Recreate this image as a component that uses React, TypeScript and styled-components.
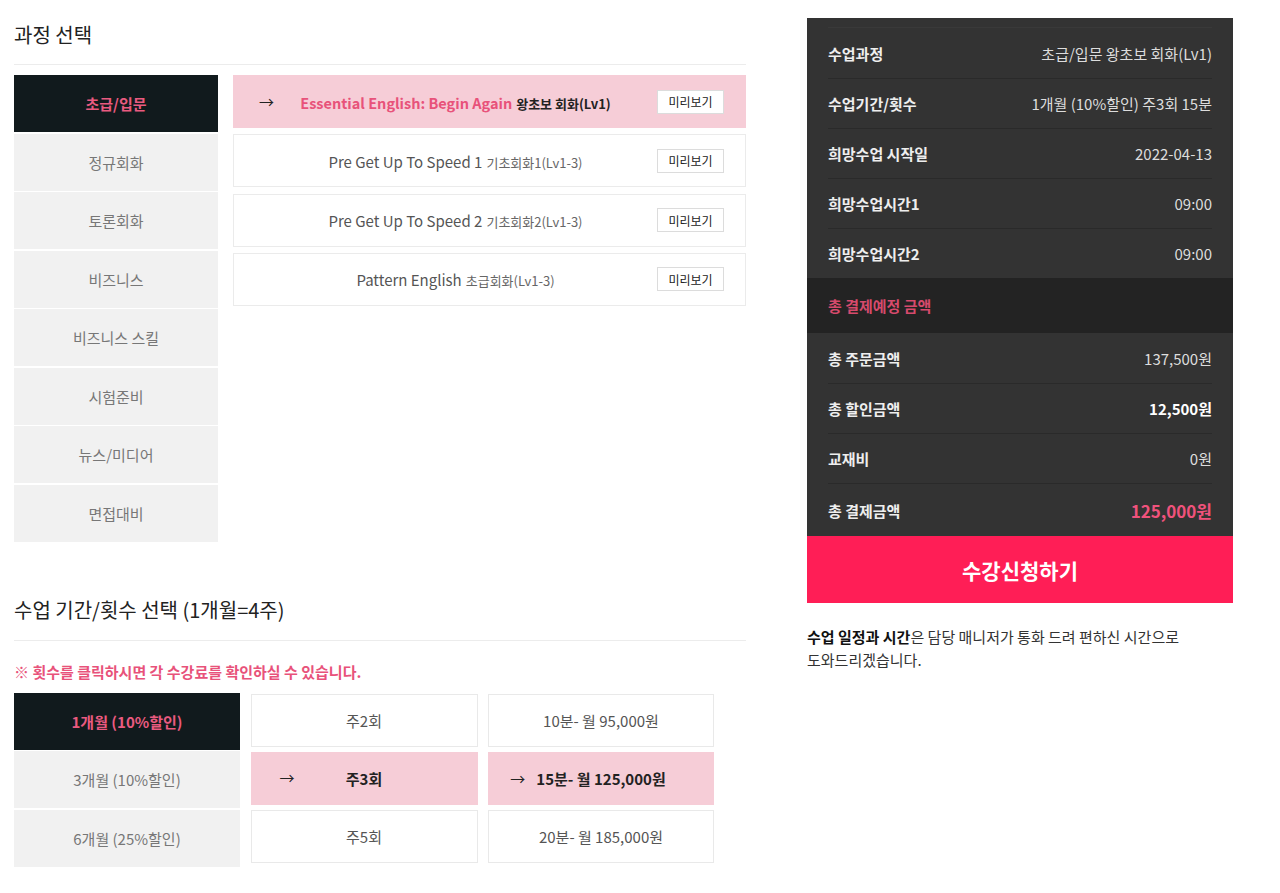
import React from "react";
import styled, { createGlobalStyle, css } from "styled-components";

const GlobalStyle = createGlobalStyle`
  * { box-sizing: border-box; }
  body {
    margin: 0;
    background: #fff;
    font-family: "Noto Sans CJK KR", "Noto Sans", sans-serif;
    color: #222;
  }
`;

const categories = [
  "초급/입문",
  "정규회화",
  "토론회화",
  "비즈니스",
  "비즈니스 스킬",
  "시험준비",
  "뉴스/미디어",
  "면접대비",
];

const courses = [
  { title: "Essential English: Begin Again", sub: "왕초보 회화(Lv1)", active: true },
  { title: "Pre Get Up To Speed 1", sub: "기초회화1(Lv1-3)", active: false },
  { title: "Pre Get Up To Speed 2", sub: "기초회화2(Lv1-3)", active: false },
  { title: "Pattern English", sub: "초급회화(Lv1-3)", active: false },
];

const periods = ["1개월 (10%할인)", "3개월 (10%할인)", "6개월 (25%할인)"];
const counts = ["주2회", "주3회", "주5회"];
const prices = ["10분- 월 95,000원", "15분- 월 125,000원", "20분- 월 185,000원"];

const summaryTop = [
  { label: "수업과정", value: "초급/입문 왕초보 회화(Lv1)" },
  { label: "수업기간/횟수", value: "1개월 (10%할인) 주3회 15분" },
  { label: "희망수업 시작일", value: "2022-04-13" },
  { label: "희망수업시간1", value: "09:00" },
  { label: "희망수업시간2", value: "09:00" },
];

export default function App() {
  return (
    <>
      <GlobalStyle />
      <Page>
        <Main>
          <SectionTitle>과정 선택</SectionTitle>
          <Divider />
          <CourseArea>
            <TabList>
              {categories.map((c, i) => (
                <Tab key={c} $active={i === 0}>
                  {c}
                </Tab>
              ))}
            </TabList>
            <CourseList>
              {courses.map((c) => (
                <CourseRow key={c.title} $active={c.active}>
                  {c.active && <RowArrow $left={25}>→</RowArrow>}
                  <CourseLabel>
                    <CourseTitle $active={c.active}>{c.title}</CourseTitle>
                    <CourseSub $active={c.active}>{c.sub}</CourseSub>
                  </CourseLabel>
                  <PreviewButton>미리보기</PreviewButton>
                </CourseRow>
              ))}
            </CourseList>
          </CourseArea>

          <SectionTitle $top={53}>수업 기간/횟수 선택 (1개월=4주)</SectionTitle>
          <Divider $top={15} />
          <Notice>※ 횟수를 클릭하시면 각 수강료를 확인하실 수 있습니다.</Notice>
          <OptionGrid>
            <PeriodList>
              {periods.map((p, i) => (
                <Tab key={p} $active={i === 0}>
                  {p}
                </Tab>
              ))}
            </PeriodList>
            <OptionColumn>
              {counts.map((c, i) => (
                <OptionCell key={c} $active={i === 1}>
                  {i === 1 && <RowArrow $left={28}>→</RowArrow>}
                  {c}
                </OptionCell>
              ))}
            </OptionColumn>
            <OptionColumn>
              {prices.map((p, i) => (
                <OptionCell key={p} $active={i === 1}>
                  <PriceText>
                    {i === 1 && <LeadArrow>→</LeadArrow>}
                    {p}
                  </PriceText>
                </OptionCell>
              ))}
            </OptionColumn>
          </OptionGrid>
        </Main>

        <Aside>
          <Panel>
            <SummaryGroup $topLine>
              {summaryTop.map((r) => (
                <SummaryRow key={r.label}>
                  <SummaryLabel>{r.label}</SummaryLabel>
                  <SummaryValue>{r.value}</SummaryValue>
                </SummaryRow>
              ))}
            </SummaryGroup>
            <TotalHeader>총 결제예정 금액</TotalHeader>
            <SummaryGroup>
              <SummaryRow>
                <SummaryLabel>총 주문금액</SummaryLabel>
                <SummaryValue>137,500원</SummaryValue>
              </SummaryRow>
              <SummaryRow>
                <SummaryLabel>총 할인금액</SummaryLabel>
                <SummaryValue $tone="strong">12,500원</SummaryValue>
              </SummaryRow>
              <SummaryRow>
                <SummaryLabel>교재비</SummaryLabel>
                <SummaryValue>0원</SummaryValue>
              </SummaryRow>
              <SummaryRow $tall>
                <SummaryLabel>총 결제금액</SummaryLabel>
                <SummaryValue $tone="pink">125,000원</SummaryValue>
              </SummaryRow>
            </SummaryGroup>
            <ApplyButton>수강신청하기</ApplyButton>
          </Panel>
          <Note>
            <b>수업 일정과 시간</b>은 담당 매니저가 통화 드려 편하신 시간으로
            도와드리겠습니다.
          </Note>
        </Aside>
      </Page>
    </>
  );
}

const Page = styled.div`
  display: flex;
  align-items: flex-start;
  padding: 0 0 0 14px;
  gap: 61px;
`;

const Main = styled.div`
  width: 732px;
  padding-top: 20px;
  display: flex;
  flex-direction: column;
`;

const SectionTitle = styled.h2<{ $top?: number }>`
  margin: ${(p) => p.$top ?? 0}px 0 0;
  font-size: 20px;
  line-height: 30px;
  font-weight: 400;
  color: #222;
`;

const Divider = styled.div<{ $top?: number }>`
  height: 1px;
  background: #ececec;
  margin-top: ${(p) => p.$top ?? 14}px;
`;

const CourseArea = styled.div`
  display: flex;
  gap: 15px;
  margin-top: 10px;
`;

const TabList = styled.div`
  width: 204px;
  display: flex;
  flex-direction: column;
  gap: 1.5px;
`;

const Tab = styled.div<{ $active?: boolean }>`
  height: 57px;
  display: flex;
  align-items: center;
  justify-content: center;
  font-size: 15px;
  background: #f1f1f1;
  color: #777;
  ${(p) =>
    p.$active &&
    css`
      background: #111a1d;
      color: #ea5a80;
      font-weight: 700;
    `}
`;

const CourseList = styled.div`
  flex: 1;
  display: flex;
  flex-direction: column;
  gap: 6.3px;
`;

const CourseRow = styled.div<{ $active?: boolean }>`
  position: relative;
  height: 53px;
  display: flex;
  align-items: center;
  padding-right: 21px;
  border: 1px solid ${(p) => (p.$active ? "#f6cdd7" : "#ebebeb")};
  background: ${(p) => (p.$active ? "#f6cdd7" : "#fff")};
`;

const RowArrow = styled.span<{ $left: number }>`
  position: absolute;
  left: ${(p) => p.$left}px;
  top: 50%;
  transform: translateY(-52%);
  font-size: 15px;
  font-weight: 400;
  color: #222;
`;

const PriceText = styled.span`
  position: relative;
`;

const LeadArrow = styled.span`
  position: absolute;
  right: 100%;
  margin-right: 11px;
  font-weight: 400;
`;

const CourseLabel = styled.div`
  flex: 1;
  padding-left: 20px;
  text-align: center;
  white-space: nowrap;
`;

const CourseTitle = styled.span<{ $active?: boolean }>`
  font-size: 15px;
  color: #555;
  ${(p) =>
    p.$active &&
    css`
      color: #e8527a;
      font-weight: 700;
      font-size: 14.5px;
    `}
`;

const CourseSub = styled.span<{ $active?: boolean }>`
  margin-left: 4px;
  font-size: 13px;
  color: #666;
  ${(p) =>
    p.$active &&
    css`
      color: #222;
      font-weight: 700;
    `}
`;

const PreviewButton = styled.button`
  width: 67px;
  height: 24px;
  padding: 0;
  border: 1px solid #dcdcdc;
  background: #fff;
  font-family: inherit;
  font-size: 12px;
  color: #222;
`;

const Notice = styled.p`
  margin: 21px 0 0;
  font-size: 15px;
  line-height: 20px;
  font-weight: 700;
  color: #e8527a;
`;

const OptionGrid = styled.div`
  display: grid;
  grid-template-columns: 226px 227px 226px;
  column-gap: 10.5px;
  margin-top: 11px;
`;

const PeriodList = styled.div`
  display: flex;
  flex-direction: column;
  gap: 1.5px;
`;

const OptionColumn = styled.div`
  display: flex;
  flex-direction: column;
  gap: 5px;
  padding-top: 1px;
`;

const OptionCell = styled.div<{ $active?: boolean }>`
  position: relative;
  height: 53px;
  display: flex;
  align-items: center;
  justify-content: center;
  font-size: 15px;
  color: #555;
  border: 1px solid #e9e9e9;
  background: #fff;
  ${(p) =>
    p.$active &&
    css`
      background: #f6cdd7;
      border-color: #f6cdd7;
      color: #222;
      font-weight: 700;
    `}
`;

const Aside = styled.div`
  width: 426px;
  padding-top: 18px;
`;

const Panel = styled.div`
  background: #333;
  padding-top: 9px;
`;

const SummaryGroup = styled.div<{ $topLine?: boolean }>`
  padding: 0 21px;
  ${(p) =>
    p.$topLine &&
    css`
      border-top: 1px solid #393939;
      margin: 0 21px;
      padding: 0;
    `}
`;

const SummaryRow = styled.div<{ $tall?: boolean }>`
  height: ${(p) => (p.$tall ? 53 : 50)}px;
  display: flex;
  align-items: center;
  justify-content: space-between;
  & + & {
    border-top: 1px solid #2a2a2a;
  }
`;

const SummaryLabel = styled.span`
  font-size: 15px;
  font-weight: 700;
  color: #eee;
`;

const SummaryValue = styled.span<{ $tone?: "strong" | "pink" }>`
  font-size: 15px;
  color: #ddd;
  ${(p) =>
    p.$tone === "strong" &&
    css`
      color: #fff;
      font-weight: 700;
    `}
  ${(p) =>
    p.$tone === "pink" &&
    css`
      color: #f0527c;
      font-weight: 700;
      font-size: 17px;
    `}
`;

const TotalHeader = styled.div`
  height: 55px;
  display: flex;
  align-items: center;
  padding: 0 21px;
  background: #232323;
  font-size: 15px;
  font-weight: 700;
  color: #d64a6c;
`;

const ApplyButton = styled.button`
  display: block;
  width: 100%;
  height: 67px;
  border: 0;
  background: #ff1e56;
  font-family: inherit;
  font-size: 21px;
  font-weight: 700;
  color: #fff;
`;

const Note = styled.p`
  margin: 22px 0 0;
  font-size: 15px;
  line-height: 23px;
  color: #333;
  word-break: keep-all;
  b {
    color: #111;
  }
`;
